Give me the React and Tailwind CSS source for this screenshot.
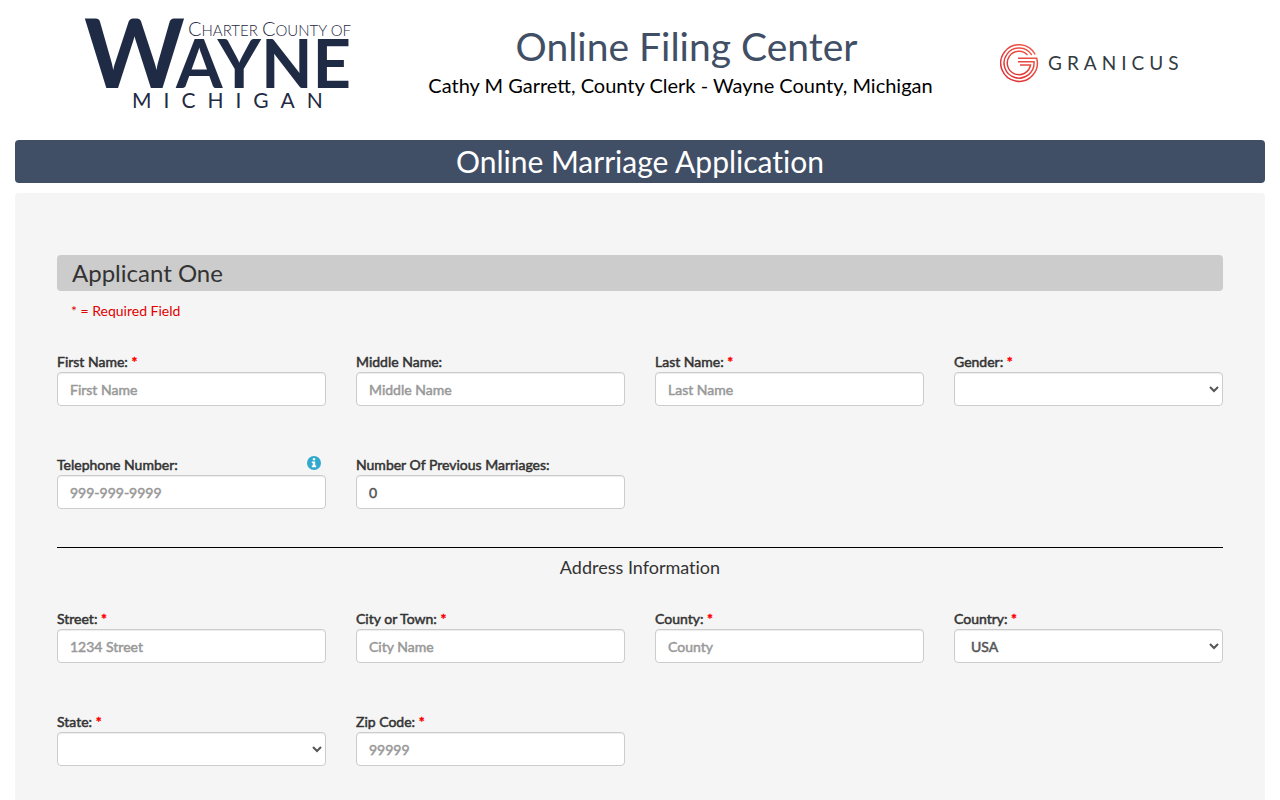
import React, { useId } from "react";

function WayneLogo() {
  return (
    <svg viewBox="0 0 276 110" className="h-[110px] w-[276px] overflow-visible" role="img" aria-label="Charter County of Wayne, Michigan" fill="#1f2a44" fontFamily="Lato, sans-serif">
      <text x="-1" y="88" fontSize="96" fontWeight="700">W</text>
      <text x="91" y="88" fontSize="67" fontWeight="700">AYNE</text>
      <text x="103" y="36" fontWeight="300"><tspan fontSize="20">C</tspan><tspan fontSize="15">HARTER </tspan><tspan fontSize="20">C</tspan><tspan fontSize="15">OUNTY OF</tspan></text>
      <text x="47" y="108" fontSize="21" letterSpacing="12">MICHIGAN</text>
    </svg>
  );
}

function GranicusLogo() {
  return (
    <svg viewBox="0 0 184 40" className="h-10 w-[184px]" role="img" aria-label="Granicus">
      <defs>
        <linearGradient id="granicus-red" x1="0" y1="40" x2="40" y2="0" gradientUnits="userSpaceOnUse">
          <stop offset="0" stopColor="#d8282f" />
          <stop offset="1" stopColor="#f0624d" />
        </linearGradient>
      </defs>
      <g fill="none" stroke="url(#granicus-red)" strokeWidth="1.5">
        <path d="M35.2 11.5 A18.3 18.3 0 1 0 36.7 15.3 H18" />
        <path d="M31.7 12 A15 15 0 1 0 34 18.8 H18" />
        <path d="M27.5 12 A11.7 11.7 0 1 0 30.5 22 H20" />
      </g>
      <text x="48" y="27" fontSize="19" letterSpacing="5" fill="#333b42" fontFamily="Lato, sans-serif">GRANICUS</text>
    </svg>
  );
}

const control =
  "block h-[34px] w-full rounded border border-[#ccc] bg-white text-sm text-[#555] shadow-[inset_0_1px_1px_rgba(0,0,0,0.075)] [-webkit-text-stroke:0.5px] placeholder:text-[#999]";

function Field({ label, required, info, options, ...props }) {
  const id = useId();
  return (
    <div>
      <div className="flex h-5 items-center justify-between">
        <label htmlFor={id} className="text-sm leading-5 [-webkit-text-stroke:0.5px]">
          {label}: {required && <span className="text-[#f00]">*</span>}
        </label>
        {info && (
          <button type="button" aria-label="Telephone number help" className="mr-1 mb-1">
            <svg viewBox="0 0 16 16" className="size-4">
              <circle cx="8" cy="8" r="7" fill="#31a9cf" />
              <path d="M6.8 3.2h2.4v2H6.8zM5.8 6.4h3.4v4.2h1v1.6H5.8v-1.6h1V8h-1z" fill="#fff" />
            </svg>
          </button>
        )}
      </div>
      {options ? (
        <select id={id} className={control + " px-3"} {...props}>
          {options.map((o) => (
            <option key={o}>{o}</option>
          ))}
        </select>
      ) : (
        <input id={id} type="text" className={control + " px-3"} {...props} />
      )}
    </div>
  );
}

const fieldGrid = "grid grid-cols-4 gap-x-[30px] gap-y-[49px]";

export default function App() {
  return (
    <div className="flex min-h-screen flex-col bg-white px-[15px] font-[Lato,sans-serif] text-[#333]">
      <header className="flex h-[140px] items-start justify-between pr-[81px] pl-[70px]">
        <WayneLogo />
        <div className="pt-6 text-center">
          <h1 className="pl-3 text-[39px] leading-[44px] text-[#414f66]">Online Filing Center</h1>
          <p className="text-xl leading-[34px] text-black">Cathy M Garrett, County Clerk - Wayne County, Michigan</p>
        </div>
        <div className="pt-[43px]">
          <GranicusLogo />
        </div>
      </header>

      <h2 className="rounded bg-[#414f66] pb-px text-center text-[30px] leading-[42px] text-white [font-variant-ligatures:none]">
        Online Marriage Application
      </h2>

      <main className="mt-2.5 flex-1 rounded-t bg-[#f5f5f5] px-[42px] pt-[62px]">
        <form>
          <h3 className="rounded bg-[#ccc] px-[15px] text-2xl leading-9">Applicant One</h3>
          <p className="mt-2.5 px-3.5 text-sm leading-5 text-[#e00000]">* = Required Field</p>

          <div className={fieldGrid + " mt-[31px]"}>
            <Field label="First Name" required placeholder="First Name" />
            <Field label="Middle Name" placeholder="Middle Name" />
            <Field label="Last Name" required placeholder="Last Name" />
            <Field label="Gender" required options={["", "Female", "Male"]} />
            <Field label="Telephone Number" info placeholder="999-999-9999" />
            <Field label="Number Of Previous Marriages" defaultValue="0" />
          </div>

          <hr className="mt-[38px] border-black" />
          <h4 className="mt-2 text-center text-lg leading-[22px] [font-variant-ligatures:none]">Address Information</h4>

          <div className={fieldGrid + " mt-[31px]"}>
            <Field label="Street" required placeholder="1234 Street" />
            <Field label="City or Town" required placeholder="City Name" />
            <Field label="County" required placeholder="County" />
            <Field label="Country" required options={["USA", "Canada"]} />
            <Field label="State" required options={["", "Michigan", "Ohio"]} />
            <Field label="Zip Code" required placeholder="99999" />
          </div>
        </form>
      </main>
    </div>
  );
}
